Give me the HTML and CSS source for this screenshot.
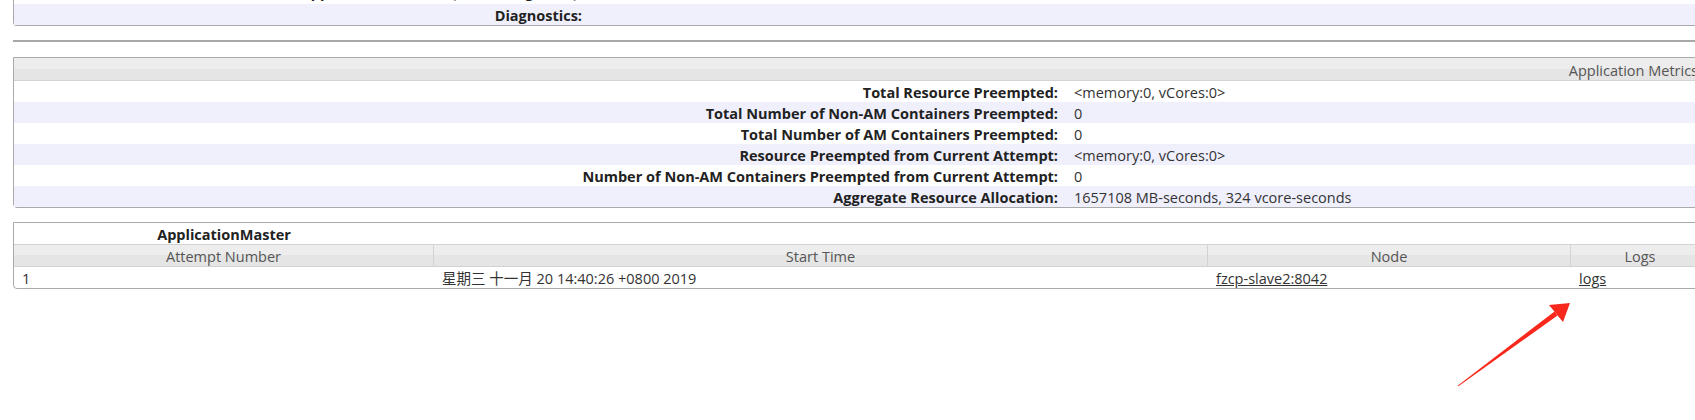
FILE: index.html
```html
<!DOCTYPE html>
<html>
<head>
<meta charset="utf-8">
<title>Application</title>
<link rel="stylesheet" href="styles.css">
</head>
<body>
<div class="page">
  <div class="panel overview">
    <div class="row cut">
      <div class="label">Application Timeout (Remaining Time):</div>
      <div class="value"><a href="#">Unlimited &nbsp; &nbsp; &nbsp; &nbsp; &nbsp; &nbsp; &nbsp;</a></div>
    </div>
    <div class="row alt">
      <div class="label">Diagnostics:</div>
      <div class="value"></div>
    </div>
  </div>

  <div class="rule"></div>

  <div class="panel metrics">
    <div class="metrics-head">Application Metrics</div>
    <div class="row">
      <div class="label">Total Resource Preempted:</div>
      <div class="value">&lt;memory:0, vCores:0&gt;</div>
    </div>
    <div class="row alt">
      <div class="label">Total Number of Non-AM Containers Preempted:</div>
      <div class="value">0</div>
    </div>
    <div class="row">
      <div class="label">Total Number of AM Containers Preempted:</div>
      <div class="value">0</div>
    </div>
    <div class="row alt">
      <div class="label">Resource Preempted from Current Attempt:</div>
      <div class="value">&lt;memory:0, vCores:0&gt;</div>
    </div>
    <div class="row">
      <div class="label">Number of Non-AM Containers Preempted from Current Attempt:</div>
      <div class="value">0</div>
    </div>
    <div class="row alt">
      <div class="label">Aggregate Resource Allocation:</div>
      <div class="value">1657108 MB-seconds, 324 vcore-seconds</div>
    </div>
  </div>

  <div class="panel attempts">
    <div class="att-title">ApplicationMaster</div>
    <div class="att-head">
      <div class="hcell">Attempt Number</div>
      <div class="hcell">Start Time</div>
      <div class="hcell">Node</div>
      <div class="hcell">Logs</div>
    </div>
    <div class="att-row">
      <div class="dcell">1</div>
      <div class="dcell">星期三 十一月 20 14:40:26 +0800 2019</div>
      <div class="dcell"><a href="#">fzcp-slave2:8042</a></div>
      <div class="dcell"><a href="#">logs</a></div>
    </div>
  </div>
</div>

<svg class="arrow" width="140" height="110" viewBox="0 0 140 110" xmlns="http://www.w3.org/2000/svg">
  <polygon points="17.6,95.7 114.5,21.5 117.5,25.5 18.4,96.3" fill="#f8291c"/>
  <polygon points="130,13 109,15 123,32" fill="#f8291c"/>
</svg>
</body>
</html>
```

FILE: styles.css
```css
html, body {
  margin: 0;
  padding: 0;
  overflow: hidden;
  background: #ffffff;
}

body {
  font-family: "Open Sans", "Noto Sans CJK SC", sans-serif;
  font-size: 14.5px;
  color: #333333;
}

* {
  box-sizing: border-box;
}

.page {
  margin-top: -17px;
  padding-left: 13px;
  width: 1710px;
  display: flex;
  flex-direction: column;
}

a {
  color: #333333;
  text-decoration: underline;
}

.panel {
  border: 1px solid #aaaaaa;
  border-radius: 0 0 4px 4px;
  background: #ffffff;
}

.overview {
  border-top: none;
}

.row {
  display: grid;
  height: 21px;
  padding-top: 2px;
  line-height: 19px;
  white-space: nowrap;
}

.row.cut {
  padding-top: 0;
  line-height: 19px;
}

.overview .row {
  grid-template-columns: 576px 1fr;
}

.metrics .row {
  grid-template-columns: 1052px 1fr;
}

.row.alt {
  background: #f0f0fd;
}

.label {
  font-weight: bold;
  text-align: right;
  padding-right: 8px;
  color: #222222;
}

.value {
  padding-left: 8px;
}

.rule {
  height: 2px;
  background: #a8a8a8;
  margin-top: 14px;
  margin-bottom: 15px;
}

.metrics-head {
  height: 23px;
  padding-top: 3px;
  line-height: 19px;
  border-bottom: 1px solid #d3d3d3;
  background: linear-gradient(#ededed 0, #ededed 50%, #e5e5e5 50%, #e5e5e5 100%);
  color: #555555;
  text-align: right;
  padding-right: 11px;
  white-space: nowrap;
}

.attempts {
  margin-top: 14px;
}

.att-title {
  width: 420px;
  height: 21px;
  padding-top: 2px;
  line-height: 19px;
  text-align: center;
  font-weight: bold;
  color: #222222;
}

.att-head,
.att-row {
  display: grid;
  grid-template-columns: 419px 774px 363px 1fr;
  white-space: nowrap;
}

.att-head {
  border-top: 1px solid #d3d3d3;
  border-bottom: 1px solid #d3d3d3;
  background: linear-gradient(#ededed 0, #ededed 50%, #e5e5e5 50%, #e5e5e5 100%);
}

.hcell {
  height: 21px;
  padding-top: 2px;
  line-height: 19px;
  text-align: center;
  color: #555555;
}

.hcell + .hcell {
  border-left: 1px solid #d3d3d3;
}

.dcell {
  height: 21px;
  padding-top: 2px;
  line-height: 19px;
  padding-left: 8px;
}

.dcell + .dcell {
  border-left: 1px solid transparent;
}

.arrow {
  position: absolute;
  left: 1440px;
  top: 290px;
}
```
